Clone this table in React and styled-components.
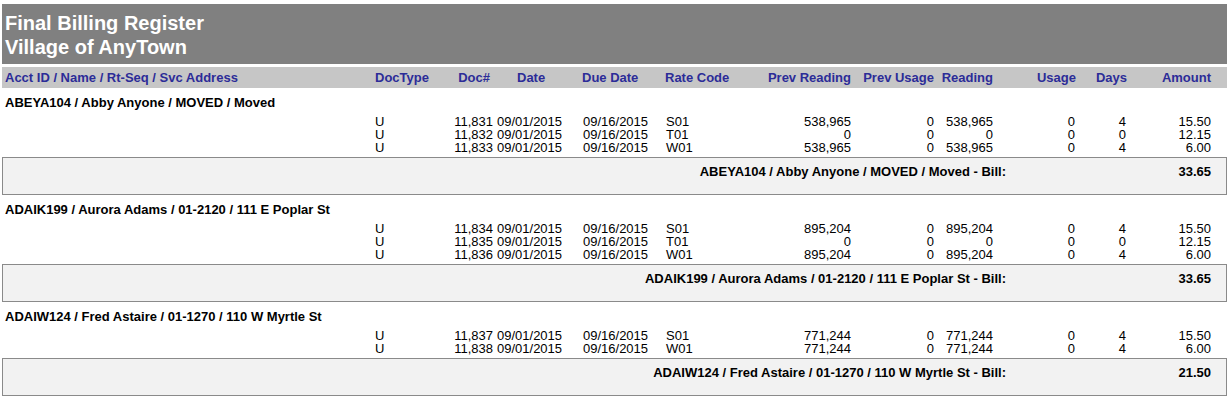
import React from "react";
import styled, { createGlobalStyle } from "styled-components";

const GlobalStyle = createGlobalStyle`
  html, body {
    margin: 0;
    padding: 0;
    background: #ffffff;
  }
  body {
    font-family: "Liberation Sans", Arial, sans-serif;
    color: #000;
  }
`;

// column widths shared by the header band and the detail rows
const COLS = "371px 72px 49px 84px 84px 98px 95px 83px 60px 82px 50px 97px";

const columns = [
  { label: "Acct ID / Name / Rt-Seq / Svc Address", align: "left", hpad: "0 0 0 3px" },
  { label: "DocType", align: "left", hpad: "0 0 0 2px", dpad: "0 0 0 2px" },
  { label: "Doc#", align: "right", hpad: "0 4px 0 0", dpad: "0 1px 0 0" },
  { label: "Date", align: "left", hpad: "0 0 0 23px", dpad: "0 0 0 3px" },
  { label: "Due Date", align: "left", hpad: "0 0 0 4px", dpad: "0 0 0 5px" },
  { label: "Rate Code", align: "left", hpad: "0 0 0 3px", dpad: "0 0 0 4px" },
  { label: "Prev Reading", align: "right", hpad: "0 4px 0 0", dpad: "0 4px 0 0" },
  { label: "Prev Usage", align: "right", hpad: "0 4px 0 0", dpad: "0 4px 0 0" },
  { label: "Reading", align: "right", hpad: "0 5px 0 0", dpad: "0 5px 0 0" },
  { label: "Usage", align: "right", hpad: "0 4px 0 0", dpad: "0 5px 0 0" },
  { label: "Days", align: "right", hpad: "0 3px 0 0", dpad: "0 4px 0 0" },
  { label: "Amount", align: "right", hpad: "0 16px 0 0", dpad: "0 16px 0 0" },
];

const groups = [
  {
    title: "ABEYA104 / Abby Anyone / MOVED / Moved",
    total: "33.65",
    rows: [
      ["U", "11,831", "09/01/2015", "09/16/2015", "S01", "538,965", "0", "538,965", "0", "4", "15.50"],
      ["U", "11,832", "09/01/2015", "09/16/2015", "T01", "0", "0", "0", "0", "0", "12.15"],
      ["U", "11,833", "09/01/2015", "09/16/2015", "W01", "538,965", "0", "538,965", "0", "4", "6.00"],
    ],
  },
  {
    title: "ADAIK199 / Aurora Adams / 01-2120 / 111 E Poplar St",
    total: "33.65",
    rows: [
      ["U", "11,834", "09/01/2015", "09/16/2015", "S01", "895,204", "0", "895,204", "0", "4", "15.50"],
      ["U", "11,835", "09/01/2015", "09/16/2015", "T01", "0", "0", "0", "0", "0", "12.15"],
      ["U", "11,836", "09/01/2015", "09/16/2015", "W01", "895,204", "0", "895,204", "0", "4", "6.00"],
    ],
  },
  {
    title: "ADAIW124 / Fred Astaire / 01-1270 / 110 W Myrtle St",
    total: "21.50",
    rows: [
      ["U", "11,837", "09/01/2015", "09/16/2015", "S01", "771,244", "0", "771,244", "0", "4", "15.50"],
      ["U", "11,838", "09/01/2015", "09/16/2015", "W01", "771,244", "0", "771,244", "0", "4", "6.00"],
    ],
  },
];

function App() {
  return (
    <>
      <GlobalStyle />
      <Report>
        <TitleBar>
          <TitleLine>Final Billing Register</TitleLine>
          <TitleLine>Village of AnyTown</TitleLine>
        </TitleBar>

        <ColumnBar>
          {columns.map((c) => (
            <HeadCell key={c.label} $align={c.align} $pad={c.hpad}>
              {c.label}
            </HeadCell>
          ))}
        </ColumnBar>

        {groups.map((g) => (
          <Group key={g.title}>
            <GroupTitle>{g.title}</GroupTitle>
            <Rows>
              {g.rows.map((r) => (
                <DetailRow key={r[1]}>
                  <Cell />
                  {r.map((v, i) => {
                    const col = columns[i + 1];
                    return (
                      <Cell key={i} $align={col.align} $pad={col.dpad}>
                        {v}
                      </Cell>
                    );
                  })}
                </DetailRow>
              ))}
            </Rows>
            <SummaryBox>
              <SummaryLabel>{g.title} - Bill:</SummaryLabel>
              <SummaryAmount>{g.total}</SummaryAmount>
            </SummaryBox>
          </Group>
        ))}
      </Report>
    </>
  );
}

const Report = styled.div`
  width: 1225px;
  margin: 4px 0 0 2px;
`;

const TitleBar = styled.header`
  height: 60px;
  box-sizing: border-box;
  padding: 7px 3px 0;
  background: #808080;
`;

const TitleLine = styled.div`
  font-size: 20px;
  line-height: 24px;
  font-weight: bold;
  color: #ffffff;
`;

const ColumnBar = styled.div`
  display: grid;
  grid-template-columns: ${COLS};
  align-items: center;
  height: 21px;
  margin-top: 3px;
  background: #c6c6c6;
`;

const HeadCell = styled.div`
  font-size: 13px;
  font-weight: bold;
  color: #2c2c98;
  white-space: nowrap;
  text-align: ${(p) => p.$align || "left"};
  padding: ${(p) => p.$pad || 0};
`;

const Group = styled.section`
  padding-top: 7px;
`;

const GroupTitle = styled.div`
  font-size: 13px;
  line-height: 15px;
  font-weight: bold;
  padding-left: 3px;
  white-space: nowrap;
`;

const Rows = styled.div`
  margin-top: 5px;
`;

const DetailRow = styled.div`
  display: grid;
  grid-template-columns: ${COLS};
  height: 13px;
  font-size: 13px;
  line-height: 13px;
`;

const Cell = styled.div`
  white-space: nowrap;
  text-align: ${(p) => p.$align || "left"};
  padding: ${(p) => p.$pad || 0};
`;

const SummaryBox = styled.div`
  display: grid;
  grid-template-columns: 1003px 1fr;
  box-sizing: border-box;
  height: 38px;
  margin-top: 3px;
  padding-top: 6px;
  border: 1px solid #8a8a8a;
  background: #f2f2f2;
  font-size: 13px;
  line-height: 15px;
  font-weight: bold;
`;

const SummaryLabel = styled.div`
  text-align: right;
  white-space: nowrap;
`;

const SummaryAmount = styled.div`
  text-align: right;
  padding-right: 15px;
`;

export default App;
